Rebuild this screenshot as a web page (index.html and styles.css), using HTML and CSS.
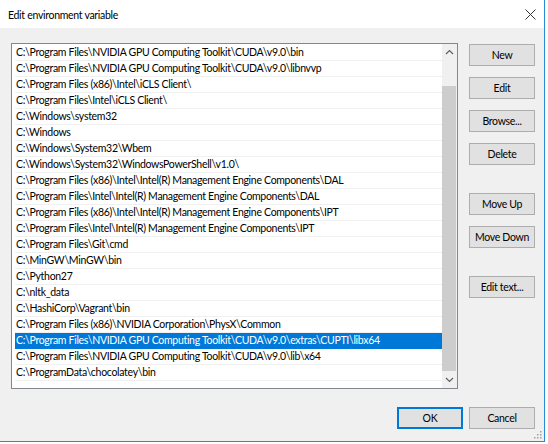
FILE: index.html
```html
<!DOCTYPE html>
<html>
<head>
<meta charset="utf-8">
<link rel="stylesheet" href="styles.css">
</head>
<body>
<div class="window">
  <div class="titlebar">
    <span class="title">Edit environment variable</span>
    <svg class="close" width="11" height="11" viewBox="0 0 11 11"><path d="M0.5 0.5 L10.5 10.5 M10.5 0.5 L0.5 10.5" stroke="#333" stroke-width="1" fill="none"/></svg>
  </div>
  <div class="content">
    <div class="main">
      <div class="listbox">
        <div class="rows">
          <div class="row">C:\Program Files\NVIDIA GPU Computing Toolkit\CUDA\v9.0\bin</div>
          <div class="row">C:\Program Files\NVIDIA GPU Computing Toolkit\CUDA\v9.0\libnvvp</div>
          <div class="row">C:\Program Files (x86)\Intel\iCLS Client\</div>
          <div class="row">C:\Program Files\Intel\iCLS Client\</div>
          <div class="row">C:\Windows\system32</div>
          <div class="row">C:\Windows</div>
          <div class="row">C:\Windows\System32\Wbem</div>
          <div class="row">C:\Windows\System32\WindowsPowerShell\v1.0\</div>
          <div class="row">C:\Program Files (x86)\Intel\Intel(R) Management Engine Components\DAL</div>
          <div class="row">C:\Program Files\Intel\Intel(R) Management Engine Components\DAL</div>
          <div class="row">C:\Program Files (x86)\Intel\Intel(R) Management Engine Components\IPT</div>
          <div class="row">C:\Program Files\Intel\Intel(R) Management Engine Components\IPT</div>
          <div class="row">C:\Program Files\Git\cmd</div>
          <div class="row">C:\MinGW\MinGW\bin</div>
          <div class="row">C:\Python27</div>
          <div class="row">C:\nltk_data</div>
          <div class="row">C:\HashiCorp\Vagrant\bin</div>
          <div class="row">C:\Program Files (x86)\NVIDIA Corporation\PhysX\Common</div>
          <div class="row selected">C:\Program Files\NVIDIA GPU Computing Toolkit\CUDA\v9.0\extras\CUPTI\libx64</div>
          <div class="row">C:\Program Files\NVIDIA GPU Computing Toolkit\CUDA\v9.0\lib\x64</div>
          <div class="row">C:\ProgramData\chocolatey\bin</div>
        </div>
        <div class="scrollbar">
          <svg class="arrow" width="15" height="17" viewBox="0 0 15 17"><path d="M4 10 L7.5 6.5 L11 10" stroke="#606060" stroke-width="1.2" fill="none"/></svg>
          <div class="track"><div class="thumb"></div></div>
          <svg class="arrow" width="15" height="17" viewBox="0 0 15 17"><path d="M4 7 L7.5 10.5 L11 7" stroke="#606060" stroke-width="1.2" fill="none"/></svg>
        </div>
      </div>
      <div class="buttons">
        <button class="btn">New</button>
        <button class="btn">Edit</button>
        <button class="btn">Browse...</button>
        <button class="btn">Delete</button>
        <button class="btn gap-big">Move Up</button>
        <button class="btn">Move Down</button>
        <button class="btn gap-big">Edit text...</button>
      </div>
    </div>
    <div class="footer">
      <button class="btn default">OK</button>
      <button class="btn">Cancel</button>
    </div>
    <svg class="grip" width="8" height="8" viewBox="0 0 8 8"><g fill="#a0a0a0"><rect x="6" y="0" width="1.5" height="1.5"/><rect x="3" y="3" width="1.5" height="1.5"/><rect x="6" y="3" width="1.5" height="1.5"/><rect x="0" y="6" width="1.5" height="1.5"/><rect x="3" y="6" width="1.5" height="1.5"/><rect x="6" y="6" width="1.5" height="1.5"/></g></svg>
  </div>
</div>
</body>
</html>
```
FILE: styles.css
```css
html, body {
  margin: 0;
  padding: 0;
  background: #ffffff;
}
body {
  font-family: Lato, "Noto Sans", sans-serif;
  font-size: 10.5px;
  letter-spacing: -0.3px;
  color: #000;
}
.window {
  width: 544px;
  height: 441px;
  border-right: 1px solid #2b8ad8;
  border-bottom: 1px solid #2b8ad8;
  display: flex;
  flex-direction: column;
  background: #f0f0f0;
}
.titlebar {
  height: 28px;
  background: #ffffff;
  display: flex;
  align-items: center;
  justify-content: space-between;
  padding: 0 8px 0 8px;
  flex: none;
}
.title {
  font-size: 10.5px;
  color: #000;
  position: relative;
  top: 1px;
}
.close {
  display: block;
}
.content {
  flex: 1;
  display: flex;
  flex-direction: column;
  padding: 15px 0 0 11px;
  position: relative;
}
.main {
  display: flex;
  gap: 11px;
}
.listbox {
  width: 445px;
  height: 344px;
  border: 1px solid #828790;
  background: #fff;
  display: flex;
  box-sizing: content-box;
}
.rows {
  flex: 1;
  padding: 1px 0 0 3px;
  overflow: hidden;
}
.row {
  height: 15px;
  line-height: 15px;
  border-bottom: 1px solid #f0f0f0;
  padding-left: 1px;
  white-space: nowrap;
  overflow: hidden;
}
.row.selected {
  background: #0078d7;
  color: #fff;
  border-bottom-color: #0078d7;
}
.scrollbar {
  width: 15px;
  display: flex;
  flex-direction: column;
  background: #f0f0f0;
  flex: none;
}
.arrow {
  display: block;
  flex: none;
}
.track {
  flex: 1;
  padding-top: 25px;
  display: flex;
  flex-direction: column;
}
.thumb {
  flex: 1;
  background: #cdcdcd;
  margin: 0 1px 0 0;
}
.buttons {
  display: flex;
  flex-direction: column;
  gap: 11px;
  padding-top: 1px;
}
.btn {
  width: 66px;
  height: 22px;
  box-sizing: border-box;
  background: #e1e1e1;
  border: 1px solid #adadad;
  font-family: Lato, "Noto Sans", sans-serif;
  font-size: 10.5px;
  letter-spacing: -0.3px;
  color: #000;
  padding: 0;
  margin: 0;
  line-height: 18px;
  white-space: nowrap;
}
.gap-big {
  margin-top: 17px;
}
.footer {
  display: flex;
  justify-content: flex-end;
  gap: 6px;
  padding: 0 9px 0 0;
  margin-top: 18px;
}
.btn.default {
  border: 2px solid #0078d7;
  line-height: 16px;
}
.grip {
  position: absolute;
  right: 2px;
  bottom: 2px;
}
```
